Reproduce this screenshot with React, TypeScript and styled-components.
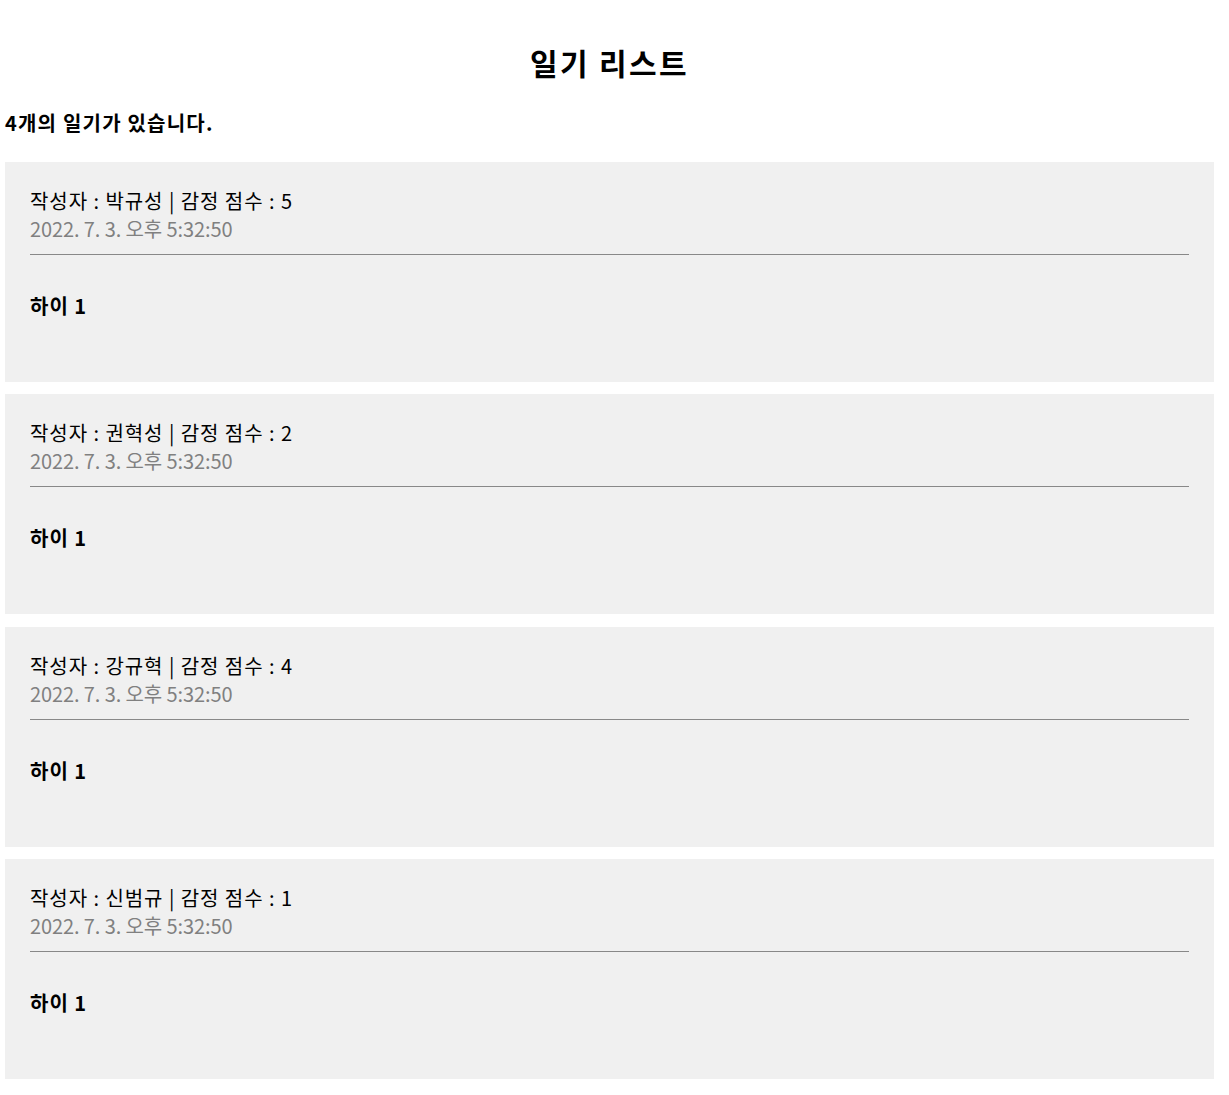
import React from "react";
import styled, { createGlobalStyle } from "styled-components";

const GlobalStyle = createGlobalStyle`
  html, body {
    margin: 0;
    padding: 0;
    background: #ffffff;
  }
  body {
    font-family: "Noto Sans CJK KR", "Noto Sans", sans-serif;
    color: #000;
  }
`;

const Page = styled.div`
  padding: 42px 15px 20px 5px;
`;

const Title = styled.h2`
  margin: 0;
  text-align: center;
  font-size: 30px;
  line-height: 40px;
  font-weight: 700;
  letter-spacing: 2.4px;
`;

const Count = styled.h4`
  margin: 27px 0 0;
  font-size: 20px;
  line-height: 28px;
  font-weight: 700;
  letter-spacing: 1.2px;
`;

const List = styled.div`
  margin-top: 25px;
  display: flex;
  flex-direction: column;
  gap: 12.3px;
`;

const Card = styled.div`
  background: #f0f0f0;
  padding: 25px;
`;

const Info = styled.div`
  padding-bottom: 11px;
  border-bottom: 1px solid #888888;
  font-size: 20px;
  line-height: 28px;
`;

const Line = styled.div<{ $muted?: boolean }>`
  color: ${(p) => (p.$muted ? "#808080" : "#000000")};
  letter-spacing: ${(p) => (p.$muted ? "-0.1px" : "0.95px")};
`;

const Content = styled.div`
  margin: 37px 0;
  font-size: 20px;
  line-height: 28px;
  font-weight: 700;
  letter-spacing: 1px;
`;

const items = [
  { author: "박규성", emotion: 5 },
  { author: "권혁성", emotion: 2 },
  { author: "강규혁", emotion: 4 },
  { author: "신범규", emotion: 1 },
];

export default function App() {
  return (
    <>
      <GlobalStyle />
      <Page>
        <Title>일기 리스트</Title>
        <Count>{items.length}개의 일기가 있습니다.</Count>
        <List>
          {items.map((it, i) => (
            <Card key={i}>
              <Info>
                <Line>
                  작성자 : {it.author} | 감정 점수 : {it.emotion}
                </Line>
                <Line $muted>2022. 7. 3. 오후 5:32:50</Line>
              </Info>
              <Content>하이 1</Content>
            </Card>
          ))}
        </List>
      </Page>
    </>
  );
}
